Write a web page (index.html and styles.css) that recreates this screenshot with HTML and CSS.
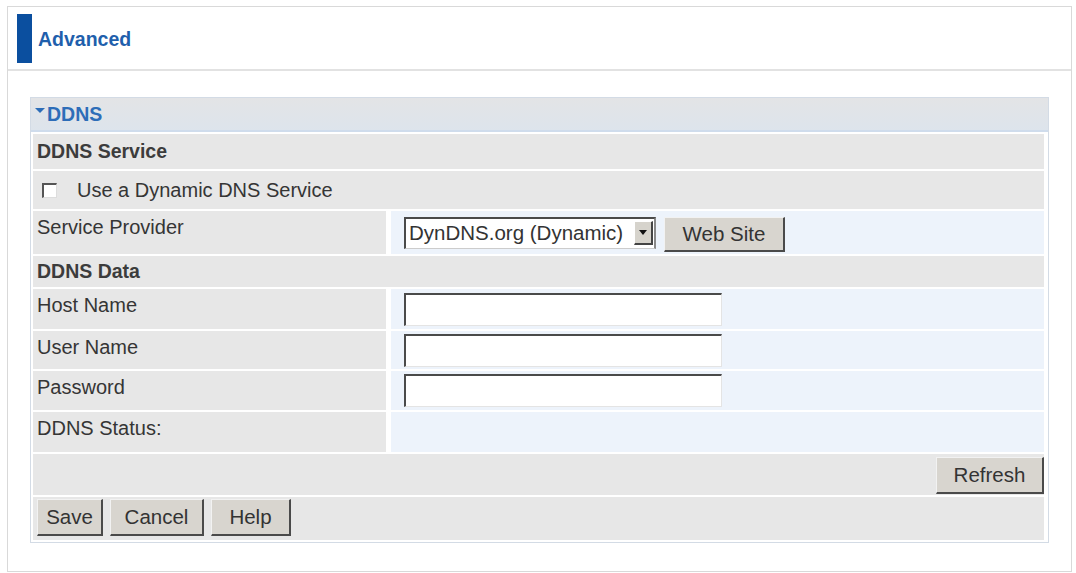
FILE: index.html
```html
<!DOCTYPE html>
<html>
<head>
<meta charset="utf-8">
<title>Advanced - DDNS</title>
<link rel="stylesheet" href="styles.css">
</head>
<body>
<div class="frame">
  <div class="header">
    <span class="bar"></span>
    <span class="title">Advanced</span>
  </div>
  <div class="panel">
    <div class="ptitle"><span class="tri"></span>DDNS</div>
    <div class="rows">
      <div class="row h35 full"><span class="bold">DDNS Service</span></div>
      <div class="row h38 full check-row"><span class="cb"></span><span>Use a Dynamic DNS Service</span></div>
      <div class="row h43">
        <div class="lab">Service Provider</div>
        <div class="val">
          <div class="select"><span class="seltext">DynDNS.org (Dynamic)</span><span class="arrow"><span class="dn"></span></span></div>
          <button class="btn web">Web Site</button>
        </div>
      </div>
      <div class="row h31 full"><span class="bold">DDNS Data</span></div>
      <div class="row h40">
        <div class="lab">Host Name</div>
        <div class="val"><span class="input"></span></div>
      </div>
      <div class="row h38">
        <div class="lab">User Name</div>
        <div class="val"><span class="input"></span></div>
      </div>
      <div class="row h39">
        <div class="lab">Password</div>
        <div class="val"><span class="input"></span></div>
      </div>
      <div class="row h40">
        <div class="lab">DDNS Status:</div>
        <div class="val"></div>
      </div>
      <div class="row h41 full refresh-row"><button class="btn refresh">Refresh</button></div>
      <div class="row h43 full btn-row">
        <button class="btn save">Save</button>
        <button class="btn cancel">Cancel</button>
        <button class="btn help">Help</button>
      </div>
    </div>
  </div>
</div>
</body>
</html>
```
FILE: styles.css
```css
* { box-sizing: border-box; }
html, body { margin: 0; padding: 0; background: #fff; }
body {
  font-family: "Liberation Sans", Arial, sans-serif;
  font-size: 20px;
  color: #353535;
}
.frame {
  margin: 6px 4px 0 7px;
  height: 566px;
  border: 1px solid #d9d9d9;
}
.header {
  height: 64px;
  border-bottom: 2px solid #e2e2e2;
  display: flex;
  align-items: flex-start;
  padding: 7px 0 0 9px;
}
.bar {
  width: 15px;
  height: 49px;
  background: #0b4f9f;
}
.title {
  margin-left: 6px;
  margin-top: 14px;
  font-weight: bold;
  font-size: 19.5px;
  color: #1f5fac;
}
.panel {
  margin: 26px 22px 0 22px;
  border: 1px solid #d3dbe5;
}
.ptitle {
  height: 34px;
  background: linear-gradient(#e3e4e6, #dde4ec);
  border-bottom: 2px solid #cfdcec;
  display: flex;
  align-items: center;
  padding-left: 4px;
  font-weight: bold;
  font-size: 19.5px;
  color: #2d6db8;
}
.tri {
  width: 0; height: 0;
  border-left: 5px solid transparent;
  border-right: 5px solid transparent;
  border-top: 5px solid #2d6db8;
  margin-right: 2px;
  margin-top: -7px;
}
.rows {
  display: flex;
  flex-direction: column;
  gap: 2px;
  padding: 2px 4px 2px 2px;
}
.row { display: flex; gap: 5px; }
.h31 { height: 31px; }
.h35 { height: 35px; }
.h38 { height: 38px; }
.h39 { height: 39px; }
.h40 { height: 40px; }
.h41 { height: 41px; }
.h43 { height: 43px; }
.full {
  background: #e7e7e7;
  align-items: center;
  padding-left: 4px;
}
.bold { font-weight: bold; font-size: 19.5px; color: #3c3c3c; }
.lab {
  width: 353px;
  background: #e7e7e7;
  padding: 5px 0 0 4px;
}
.val {
  flex: 1;
  background: #edf3fb;
  display: flex;
  align-items: center;
  padding-left: 13px;
}
.check-row { padding-left: 9px; }
.cb {
  width: 15px;
  height: 15px;
  background: #fff;
  border-top: 2px solid #555;
  border-left: 2px solid #555;
  border-right: 1px solid #ddd;
  border-bottom: 1px solid #ddd;
  margin-right: 15px;
}
.input {
  width: 318px;
  height: 33px;
  background: #fff;
  border-top: 2px solid #4a4a4a;
  border-left: 2px solid #4a4a4a;
  border-right: 1px solid #e4e4e4;
  border-bottom: 1px solid #e4e4e4;
}
.select {
  width: 252px;
  height: 32px;
  background: #fff;
  border-top: 2px solid #4a4a4a;
  border-left: 2px solid #4a4a4a;
  border-right: 2px solid #888;
  border-bottom: 1px solid #ccc;
  display: flex;
  align-items: center;
  justify-content: space-between;
  padding-left: 3px;
  font-size: 20.5px;
  color: #333;
}
.arrow {
  width: 19px;
  height: 24px;
  background: #d6d3cc;
  border-right: 2px solid #444;
  border-bottom: 2px solid #444;
  border-top: 1px solid #fff;
  border-left: 1px solid #fff;
  display: flex;
  align-items: center;
  justify-content: center;
  margin-right: 1px;
}
.dn {
  width: 0; height: 0;
  border-left: 4px solid transparent;
  border-right: 4px solid transparent;
  border-top: 5px solid #111;
}
.btn {
  font-family: "Liberation Sans", Arial, sans-serif;
  font-size: 20.5px;
  color: #333;
  background: #d8d5cf;
  border-top: 1px solid #f2f2f2;
  border-left: 1px solid #f2f2f2;
  border-right: 2px solid #4a4a4a;
  border-bottom: 2px solid #4a4a4a;
  padding: 0;
  margin: 0;
}
.web { width: 121px; height: 35px; margin-left: 8px; margin-top: 3px; }
.refresh-row { justify-content: flex-end; padding-right: 0; }
.refresh { width: 108px; height: 37px; margin-top: 1px; }
.btn-row { gap: 7px; padding-left: 4px; align-items: flex-start; padding-top: 2px; }
.save { width: 66px; height: 37px; }
.cancel { width: 94px; height: 37px; }
.help { width: 80px; height: 37px; }
```
